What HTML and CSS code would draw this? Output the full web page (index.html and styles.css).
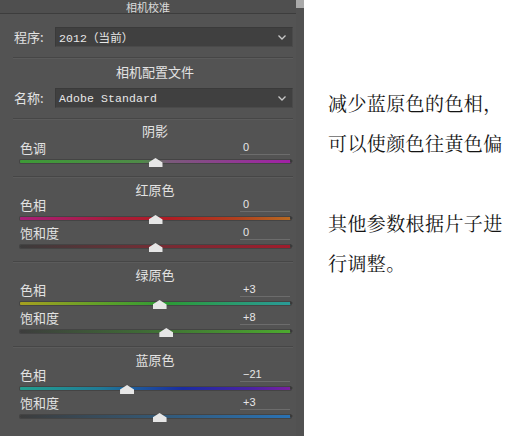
FILE: index.html
```html
<!DOCTYPE html>
<html lang="zh-CN">
<head>
<meta charset="utf-8">
<title>相机校准</title>
<link rel="stylesheet" href="styles.css">
</head>
<body>
<div class="page">
  <div class="panel">
    <div class="content">
      <div class="header"><span>相机校准</span></div>

      <div class="field first">
        <span class="field-label">程序:</span>
        <div class="select">
          <span class="select-text">2012（当前）</span>
          <svg class="chev" width="8" height="5" viewBox="0 0 8 5"><polyline points="0.5,0.5 4,4 7.5,0.5" fill="none" stroke="#c8c8c8" stroke-width="1.3"/></svg>
        </div>
      </div>
      <div class="sep"></div>

      <div class="heading h-profile">相机配置文件</div>
      <div class="field second">
        <span class="field-label">名称:</span>
        <div class="select">
          <span class="select-text">Adobe Standard</span>
          <svg class="chev" width="8" height="5" viewBox="0 0 8 5"><polyline points="0.5,0.5 4,4 7.5,0.5" fill="none" stroke="#c8c8c8" stroke-width="1.3"/></svg>
        </div>
      </div>
      <div class="sep"></div>

      <div class="heading h-first">阴影</div>
      <div class="srow">
        <div class="sline"><span>色调</span><span class="val">0</span></div>
        <div class="strack-area"><div class="track t-tint"></div><div class="thumb" style="left:50%"></div></div>
      </div>
      <div class="sep s-gap"></div>

      <div class="heading">红原色</div>
      <div class="srow">
        <div class="sline"><span>色相</span><span class="val">0</span></div>
        <div class="strack-area"><div class="track t-rh"></div><div class="thumb" style="left:50%"></div></div>
      </div>
      <div class="srow">
        <div class="sline"><span>饱和度</span><span class="val">0</span></div>
        <div class="strack-area"><div class="track t-rs"></div><div class="thumb" style="left:50%"></div></div>
      </div>
      <div class="sep s-gap"></div>

      <div class="heading">绿原色</div>
      <div class="srow">
        <div class="sline"><span>色相</span><span class="val">+3</span></div>
        <div class="strack-area"><div class="track t-gh"></div><div class="thumb" style="left:51.5%"></div></div>
      </div>
      <div class="srow">
        <div class="sline"><span>饱和度</span><span class="val">+8</span></div>
        <div class="strack-area"><div class="track t-gs"></div><div class="thumb" style="left:54%"></div></div>
      </div>
      <div class="sep s-gap"></div>

      <div class="heading">蓝原色</div>
      <div class="srow">
        <div class="sline"><span>色相</span><span class="val">−21</span></div>
        <div class="strack-area"><div class="track t-bh"></div><div class="thumb" style="left:39.5%"></div></div>
      </div>
      <div class="srow">
        <div class="sline"><span>饱和度</span><span class="val">+3</span></div>
        <div class="strack-area"><div class="track t-bs"></div><div class="thumb" style="left:51.5%"></div></div>
      </div>
    </div>
    <div class="scrollbar"><div class="scroll-thumb"></div></div>
  </div>

  <div class="note">
    <p>减少蓝原色的色相，<br>可以使颜色往黄色偏</p>
    <p class="note-second">其他参数根据片子进<br>行调整。</p>
  </div>
</div>
</body>
</html>
```

FILE: styles.css
```css
* { box-sizing: border-box; }
html, body { margin: 0; padding: 0; background: #ffffff; }
body { width: 519px; height: 436px; overflow: hidden; }

.page { display: flex; height: 436px; }

.panel {
  width: 304px;
  height: 436px;
  background: #535353;
  display: flex;
  overflow: hidden;
  font-family: "Noto Sans CJK SC", "Liberation Sans", sans-serif;
  color: #e2e2e2;
}

.content { flex: 1; padding: 0 3px 0 13px; }

.scrollbar { width: 8px; background: #515151; }
.scroll-thumb { height: 8px; background: #a9a9a9; }

.header {
  height: 14px;
  margin: 0 -3px 0 -13px;
  padding-top: 1px;
  border-bottom: 1px solid #3d3d3d;
  background: #4f4f4f;
  text-align: center;
  font-size: 11px;
  line-height: 12px;
}
.header span { display: inline-block; color: #dcdcdc; }

.field { display: flex; align-items: center; height: 20px; }
.field.first { margin-top: 13px; }
.field.second { margin-top: 8px; }
.field-label { width: 42px; font-size: 13px; line-height: 20px; padding-left: 1px; }

.select {
  flex: 1;
  height: 20px;
  background: #404040;
  border: 1px solid #3a3a3a;
  border-right-color: #4a4a4a;
  border-bottom-color: #4a4a4a;
  display: flex;
  align-items: center;
  justify-content: space-between;
  padding: 0 6px 0 3px;
}
.select-text {
  font-family: "Liberation Mono", "Noto Sans CJK SC", monospace;
  font-size: 11.5px;
  color: #e8e8e8;
  letter-spacing: 0.1px;
}
.chev { display: block; }

.sep {
  margin-top: 10px;
  height: 2px;
  border-top: 1px solid #464646;
  border-bottom: 1px solid #5b5b5b;
}
.sep.s-gap { margin-top: 7px; }

.heading {
  margin-top: 4px;
  text-align: center;
  font-size: 13px;
  line-height: 16px;
  height: 16px;
  padding-left: 4px;
}
.heading.h-profile { margin-top: 5px; }
.heading.h-first { margin-top: 3px; }

.srow { height: 28px; padding: 0 2px 0 7px; }
.h-first + .srow { margin-top: 2px; }

.sline {
  display: flex;
  justify-content: space-between;
  align-items: flex-end;
  height: 14px;
  font-size: 13px;
  line-height: 14px;
}
.val {
  width: 50px;
  height: 14px;
  margin-right: 1px;
  padding-left: 3px;
  border-bottom: 1px solid #6c6c6c;
  font-family: "Liberation Sans", sans-serif;
  font-size: 11px;
  line-height: 12px;
  color: #e6e6e6;
}

.strack-area { position: relative; height: 14px; }
.track {
  position: relative;
  top: 5px;
  height: 3px;
  border-radius: 1px;
  box-shadow: 0 0 0 1px rgba(40, 40, 40, 0.35);
}
.track::after {
  content: "";
  position: absolute;
  right: -2px;
  top: -1px;
  border-left: 3px solid #3a3a3a;
  border-top: 2.5px solid transparent;
  border-bottom: 2.5px solid transparent;
}
.t-tint { background: linear-gradient(to right, #3d9a36 0%, #4f8a48 45%, #7a5a7a 55%, #a21fa6 100%); }
.t-rh { background: linear-gradient(to right, #a81f78 0%, #a81c3a 35%, #b01c24 55%, #b0401e 80%, #b86a22 100%); }
.t-rs { background: linear-gradient(to right, #3b3b3b 0%, #6a3036 40%, #a01c2c 100%); }
.t-gh { background: linear-gradient(to right, #a6a020 0%, #5fa028 30%, #2c9a36 55%, #2a9a70 80%, #2a9a98 100%); }
.t-gs { background: linear-gradient(to right, #3d3d3d 0%, #3f6a36 45%, #4caa2e 100%); }
.t-bh { background: linear-gradient(to right, #22a090 0%, #207a96 30%, #1a2ca0 60%, #4a22a2 85%, #7a20a0 100%); }
.t-bs { background: linear-gradient(to right, #3c3c3c 0%, #35556e 45%, #2a72b4 100%); }

.thumb {
  position: absolute;
  top: 3px;
  width: 14px;
  height: 9px;
  margin-left: -7px;
  background: #e6e6e6;
  clip-path: polygon(50% 0, 100% 50%, 100% 100%, 0 100%, 0 50%);
}

.note {
  flex: 1;
  padding: 83px 0 0 24px;
  font-family: "Noto Serif CJK SC", "Noto Sans CJK SC", serif;
  font-size: 19px;
  line-height: 40px;
  letter-spacing: 0.4px;
  color: #141414;
}
.note p { margin: 0; }
.note .note-second { margin-top: 40px; }
```
